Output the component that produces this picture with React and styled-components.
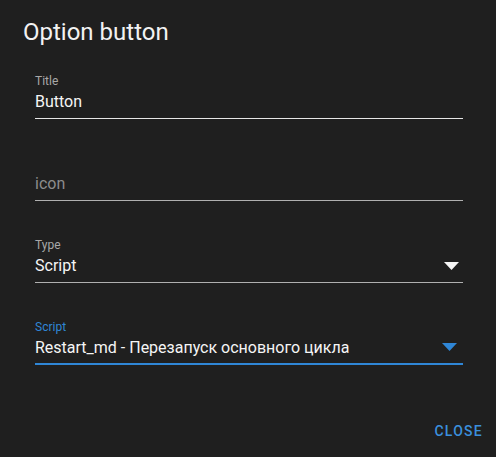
import React from 'react';
import styled, { createGlobalStyle } from 'styled-components';

const GlobalStyle = createGlobalStyle`
  html, body {
    margin: 0;
    padding: 0;
    background: #1f1f1f;
  }
  body {
    font-family: Roboto, 'Noto Sans', sans-serif;
    color: #fff;
  }
`;

const Dialog = styled.div`
  width: 496px;
  height: 457px;
  box-sizing: border-box;
  background: #1f1f1f;
  display: flex;
  flex-direction: column;
`;

const DialogTitle = styled.h2`
  margin: 0;
  padding: 17px 23px 0;
  font-size: 24px;
  font-weight: 400;
  line-height: 30px;
  color: #f2f2f2;
`;

const Form = styled.div`
  padding: 27px 33px 0 35px;
  display: flex;
  flex-direction: column;
  gap: 37px;
`;

const Field = styled.div`
  position: relative;
  display: flex;
  flex-direction: column;
  border-bottom: ${(p) => (p.focused ? '2px solid #2f86d6' : `1px solid ${p.line}`)};
  padding-bottom: ${(p) => (p.focused ? '4px' : '5px')};
`;

const Label = styled.label`
  font-size: 12px;
  line-height: 14px;
  height: 14px;
  margin-bottom: 3px;
  color: ${(p) => (p.focused ? '#2f86d6' : '#a8a8a8')};
`;

const Value = styled.div`
  font-size: 16px;
  line-height: 22px;
  color: ${(p) => (p.placeholder ? '#8c8c8c' : '#f5f5f5')};
`;

const Arrow = styled.svg`
  position: absolute;
  right: ${(p) => p.$right}px;
  bottom: 12px;
`;

const Actions = styled.div`
  margin-top: auto;
  display: flex;
  justify-content: flex-end;
  padding: 0 13px 18px 0;
`;

const CloseButton = styled.button`
  background: none;
  border: none;
  font-family: Roboto, sans-serif;
  font-size: 14px;
  font-weight: 500;
  letter-spacing: 1.25px;
  color: #3b8fdc;
  padding: 0;
  cursor: pointer;
`;

const DropArrow = ({ color, right }) => (
  <Arrow width="15" height="8" viewBox="0 0 15 8" $right={right}>
    <path d="M0 0 L15 0 L7.5 8 Z" fill={color} />
  </Arrow>
);

const fields = [
  { label: 'Title', value: 'Button', line: '#e6e6e6' },
  { value: 'icon', placeholder: true, line: '#b0b0b0' },
  { label: 'Type', value: 'Script', line: '#b0b0b0', select: true },
  {
    label: 'Script',
    value: 'Restart_md - Перезапуск основного цикла',
    select: true,
    focused: true,
  },
];

export default function App() {
  return (
    <>
      <GlobalStyle />
      <Dialog>
        <DialogTitle>Option button</DialogTitle>
        <Form>
          {fields.map((f, i) => (
            <Field key={i} line={f.line} focused={f.focused}>
              <Label focused={f.focused}>{f.label || ''}</Label>
              <Value placeholder={f.placeholder}>{f.value}</Value>
              {f.select && (
                <DropArrow
                  color={f.focused ? '#2f86d6' : '#f5f5f5'}
                  right={f.focused ? 6 : 4}
                />
              )}
            </Field>
          ))}
        </Form>
        <Actions>
          <CloseButton>CLOSE</CloseButton>
        </Actions>
      </Dialog>
    </>
  );
}
